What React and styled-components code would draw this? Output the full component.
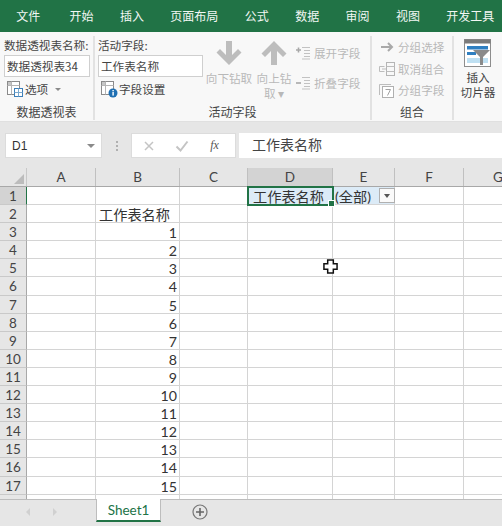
import React from "react";
import styled, { createGlobalStyle } from "styled-components";

const Global = createGlobalStyle`
  html, body { margin: 0; padding: 0; background: #fff; overflow: hidden; }
  #root { width: 502px; height: 526px; }
  * { box-sizing: border-box; }
`;
const cjk = `"Noto Sans CJK SC", "Liberation Sans", sans-serif`;
const sheetFont = `Lato, "Noto Sans CJK SC", sans-serif`;

const Page = styled.div`
  width: 502px; height: 526px; display: flex; flex-direction: column; overflow: hidden;
  background: #e6e6e6; font-family: ${cjk}; color: #444; position: relative;
`;
const TabBar = styled.div`
  height: 32px; flex: none; background: #217346; display: flex; padding-left: 3px; align-items: center;
`;
const Tab = styled.div`
  padding: 0 13.2px; margin-right: ${p => p.$mr || 0}px; color: #f2f7f4; font-size: 12px; line-height: 32px; white-space: nowrap;
`;
const Ribbon = styled.div`
  height: 90px; flex: none; background: #f8f8f8; display: flex; border-bottom: 1px solid #e0e0e0; padding-top: 4px;
`;
const Group = styled.div`
  width: ${p => p.$w}px; flex: none; display: flex; flex-direction: column; height: 84px;
  border-right: ${p => (p.$last ? 0 : 2)}px solid #e2e2e2;
`;
const GroupBody = styled.div`
  flex: 1; display: flex; min-height: 0; padding: ${p => p.$pad || "0"};
`;
const GroupLabel = styled.div`
  height: 16px; text-align: center; font-size: 12px; line-height: 16px; color: #444; flex: none;
`;
const Col = styled.div`
  display: flex; flex-direction: column; width: ${p => (p.$w ? p.$w + "px" : "auto")}; flex: none;
`;
const Caption = styled.div`
  font-size: 11.6px; line-height: 16px; height: 17px; color: #444; white-space: nowrap; padding-top: 1px;
`;
const TextBox = styled.div`
  height: 22px; width: ${p => p.$w}px; background: #fff; border: 1px solid #cfcfcf; font-size: 11.6px;
  line-height: 20px; padding-left: 2px; color: #444; white-space: nowrap; margin-top: 2px;
`;
const IconRow = styled.div`
  display: flex; align-items: center; height: 22px; margin-top: 1px; padding-left: 2px; gap: 1px; font-size: 11.6px; color: #444; white-space: nowrap;
`;
const BigButton = styled.div`
  width: ${p => p.$w}px; flex: none; display: flex; flex-direction: column; align-items: center;
  font-size: 11.6px; line-height: 15px; color: ${p => (p.$off ? "#b8b8b8" : "#444")}; text-align: center; padding-top: ${p => p.$top || 0}px;
  margin-left: ${p => p.$ml || 0}px;
`;
const BigLabel = styled.span`
  margin-top: ${p => p.$mt}px;
`;
const SmallStack = styled.div`
  display: flex; flex-direction: column; gap: ${p => p.$gap || 0}px; padding-top: ${p => p.$top || 0}px; margin-left: ${p => p.$ml || 0}px;
`;
const SmallButton = styled.div`
  height: 20px; display: flex; align-items: center; gap: 2px; font-size: 11.6px; color: #b8b8b8; white-space: nowrap;
  svg { flex: none; }
`;
const FormulaArea = styled.div`
  height: 46px; flex: none; display: flex; padding: 11px 0 0 5px; background: #e6e6e6;
`;
const NameBox = styled.div`
  width: 97px; height: 25px; background: #fff; border: 1px solid #dcdcdc; display: flex; align-items: center; justify-content: space-between;
  padding: 0 6px 0 6px; font-family: "Liberation Sans", sans-serif; font-size: 12px; color: #333;
`;
const Caret = styled.div`
  width: 0; height: 0; border-style: solid; border-color: #8a8a8a transparent transparent;
  border-width: ${p => (p.$small ? "3px 3px 0" : "4px 4px 0")}; margin-left: ${p => p.$ml || 0}px;
`;
const Dots = styled.div`
  width: 29px; flex: none; display: flex; flex-direction: column; align-items: center; justify-content: center; gap: 2px; height: 25px;
  span { width: 2px; height: 2px; background: #b0b0b0; }
`;
const FxBox = styled.div`
  width: 105px; height: 25px; background: #fff; border: 1px solid #dcdcdc; display: flex; align-items: center; flex: none;
`;
const FxCell = styled.div`
  width: 33px; display: flex; justify-content: center; align-items: center; flex: none;
  font-family: "Liberation Serif", serif; font-style: italic; font-size: 12px; color: #555;
`;
const FormulaInput = styled.div`
  flex: 1; margin-left: 3px; height: 25px; background: #fff; padding-left: 13px; font-size: 14px; line-height: 23px; color: #444; white-space: nowrap;
`;
const Sheet = styled.div`
  flex: none; height: 331px; position: relative; background: #fff; overflow: hidden;
`;
const HeaderRow = styled.div`
  display: flex; height: 19px; background: #e6e6e6; border-bottom: 1px solid #a8a8a8;
`;
const Corner = styled.div`
  width: 27px; flex: none; position: relative; border-right: 1px solid #c8c8c8;
  &::after { content: ""; position: absolute; right: 2px; bottom: 2px; width: 0; height: 0; border-style: solid; border-width: 0 0 10px 10px; border-color: transparent transparent #bcbcbc transparent; }
`;
const ColHead = styled.div`
  width: ${p => p.$w}px; flex: none; text-align: center; font-family: ${sheetFont}; font-size: 13.5px; line-height: 19px; color: #444;
  background: ${p => (p.$on ? "#d3d3d3" : "transparent")}; border-right: 1px solid #c0c0c0;
`;
const Row = styled.div`
  display: flex; height: 18.1px;
`;
const RowHead = styled.div`
  width: 27px; flex: none; text-align: center; font-family: ${sheetFont}; font-size: 13.5px; line-height: 19px; color: #444;
  background: ${p => (p.$on ? "#d3d3d3" : "#e6e6e6")}; border-right: ${p => (p.$on ? "1px solid #217346" : "1px solid #a8a8a8")}; border-bottom: 1px solid #c9c9c9;
`;
const Cell = styled.div`
  width: ${p => p.$w}px; flex: none; border-right: 1px solid #d4d4d4; border-bottom: 1px solid #d4d4d4;
  font-family: ${sheetFont}; font-size: 14.2px; line-height: 19px; color: #333; white-space: nowrap; overflow: hidden;
  text-align: ${p => (p.$right ? "right" : "left")}; padding: 0 2px 0 ${p => p.$pl || 2}px;
  background: ${p => p.$bg || "transparent"};
`;
const Selection = styled.div`
  position: absolute; left: 247px; top: 18px; width: 87px; height: 20px; border: 2px solid #217346; pointer-events: none;
  &::after { content: ""; position: absolute; right: -3px; bottom: -3px; width: 5px; height: 5px; background: #217346; border: 1px solid #fff; }
`;
const FilterBtn = styled.div`
  position: absolute; left: 379px; top: 20px; width: 16px; height: 15px; background: #fafafa; border: 1px solid #b0b0b0; display: flex; align-items: center; justify-content: center;
`;
const MiniCaret = styled.div`
  width: 0; height: 0; border-left: 3.5px solid transparent; border-right: 3.5px solid transparent; border-top: 4px solid #555;
`;
const Pointer = styled.svg`
  position: absolute; left: 323px; top: 259px; width: 15px; height: 15px;
`;
const SheetTabs = styled.div`
  flex: 1; display: flex; background: #e6e6e6; border-top: 1px solid #bdbdbd; position: relative;
`;
const NavArrows = styled.div`
  width: 96px; flex: none; display: flex; align-items: center; gap: 23px; padding: 0 0 3px 26px;
`;
const NavArrow = styled.div`
  width: 0; height: 0; border-top: 4px solid transparent; border-bottom: 4px solid transparent;
  ${p => (p.$left ? "border-right: 4px solid #d0d0d0;" : "border-left: 4px solid #d0d0d0;")}
`;
const ActiveTab = styled.div`
  width: 65px; height: 23px; margin-top: -1px; background: #fff; border-left: 1px solid #bdbdbd; border-right: 1px solid #bdbdbd; border-bottom: 2px solid #217346;
  text-align: center; font-family: ${sheetFont}; font-size: 13.5px; line-height: 23px; color: #217346; flex: none;
`;
const AddSheet = styled.svg`
  width: 16px; height: 16px; margin: 4px 0 0 31px; flex: none;
`;

const ColumnsW = [69, 84, 68, 85, 62, 69, 69];

const ArrowDown = ({ up }) => (
  <svg width="26" height="26" viewBox="0 0 26 26" style={up ? { transform: "rotate(180deg)" } : undefined}>
    <path d="M10 1h6v14l6-6 3.5 3.5L13 25 .5 12.5 4 9l6 6z" fill="#bdbdbd" />
  </svg>
);
const Sheets = ({ badge }) => (
  <svg width="18" height="18" viewBox="0 0 18 18">
    <rect x="1.5" y="1.5" width="12" height="13" fill="#fff" stroke="#8a8a8a" />
    <path d="M1.5 5.5h12M5.5 1.5v13" stroke="#b5b5b5" />
    <rect x="2" y="2" width="3" height="3" fill="#c6c6c6" />
    {badge ? (
      <>
        <circle cx="13" cy="13" r="4.5" fill="#1f6fb2" />
        <rect x="12.4" y="12" width="1.4" height="3.6" fill="#fff" />
        <rect x="12.4" y="10" width="1.4" height="1.3" fill="#fff" />
      </>
    ) : (
      <>
        <rect x="8.5" y="8.5" width="8" height="8" fill="#fff" stroke="#3d7fb8" />
        <path d="M8.5 12.5h8M12.5 8.5v8" stroke="#7aa9cf" />
      </>
    )}
  </svg>
);
const Expand = ({ minus }) => (
  <svg width="16" height="14" viewBox="0 0 16 14">
    <path d={minus ? "M0 7h5" : "M0 4h5M2.5 1.5v5"} stroke="#a8a8a8" strokeWidth="1.6" />
    <path d="M6 1.5h8M8 4.5h6M8 7.5h6M8 10.5h6M6 13h8" stroke="#c2c2c2" />
  </svg>
);
const GroupSel = () => (
  <svg width="18" height="12" viewBox="0 0 18 12">
    <path d="M3 6h10M10 2l4 4-4 4" stroke="#a9a9a9" strokeWidth="2" fill="none" />
  </svg>
);
const Ungroup = () => (
  <svg width="18" height="16" viewBox="0 0 18 16">
    <rect x="8.5" y="1.5" width="8" height="13" fill="none" stroke="#b5b5b5" />
    <path d="M8.5 5.5h8M8.5 10.5h8M1.5 5.5h5M1.5 10.5h5M1.5 5.5v5M4 8h4" stroke="#bdbdbd" />
  </svg>
);
const GroupField = () => (
  <svg width="18" height="16" viewBox="0 0 18 16">
    <path d="M1.5 13V2.5H13" stroke="#bdbdbd" fill="none" />
    <rect x="4.5" y="4.5" width="11" height="11" fill="#fff" stroke="#b0b0b0" />
    <path d="M7.5 7.5h5l-3 6" stroke="#a0a0a0" fill="none" />
  </svg>
);
const Slicer = () => (
  <svg width="28" height="28" viewBox="0 0 28 28">
    <rect x=".5" y=".5" width="26" height="27" fill="#fff" stroke="#8d8d8d" />
    <rect x=".5" y=".5" width="26" height="4" fill="#7a7a7a" />
    <rect x="3" y="7" width="21" height="3.5" fill="#2f7fc1" />
    <rect x="3" y="13" width="9" height="3" fill="#2f7fc1" />
    <rect x="3" y="19" width="21" height="5" fill="#bfe0f2" />
    <path d="M9 11h17l-7 7v8h-3v-8z" fill="#8a8a8a" />
  </svg>
);

const ribbonTabs = ["文件", "开始", "插入", "页面布局", "公式", "数据", "审阅", "视图", "开发工具"];

export default function App() {
  const rows = [];
  for (let i = 1; i <= 18; i++) rows.push(i);
  return (
    <Page>
      <Global />
      <TabBar>
        {ribbonTabs.map((t, i) => (
          <Tab key={t} $mr={i === 0 ? 3 : 0}>{t}</Tab>
        ))}
      </TabBar>
      <Ribbon>
        <Group $w={95}>
          <GroupBody $pad="0 0 0 4px">
            <Col>
              <Caption>数据透视表名称:</Caption>
              <TextBox $w={86}>数据透视表34</TextBox>
              <IconRow><Sheets /> 选项 <Caret $small $ml={6} /></IconRow>
            </Col>
          </GroupBody>
          <GroupLabel>数据透视表</GroupLabel>
        </Group>
        <Group $w={277}>
          <GroupBody $pad="0 0 0 3px">
            <Col $w={107}>
              <Caption>活动字段:</Caption>
              <TextBox $w={105}>工作表名称</TextBox>
              <IconRow><Sheets badge /> 字段设置</IconRow>
            </Col>
            <BigButton $w={48} $off $top={4}>
              <ArrowDown />
              <BigLabel $mt={5}>向下钻取</BigLabel>
            </BigButton>
            <BigButton $w={38} $off $ml={2} $top={4}>
              <ArrowDown up />
              <BigLabel $mt={5}>向上钻<br />取 ▾</BigLabel>
            </BigButton>
            <SmallStack $ml={3} $gap={10} $top={7}>
              <SmallButton><Expand /> 展开字段</SmallButton>
              <SmallButton><Expand minus /> 折叠字段</SmallButton>
            </SmallStack>
          </GroupBody>
          <GroupLabel>活动字段</GroupLabel>
        </Group>
        <Group $w={82}>
          <GroupBody $pad="0 0 0 6px">
            <SmallStack $gap={1.5} $top={1}>
              <SmallButton><GroupSel /> 分组选择</SmallButton>
              <SmallButton><Ungroup /> 取消组合</SmallButton>
              <SmallButton><GroupField /> 分组字段</SmallButton>
            </SmallStack>
          </GroupBody>
          <GroupLabel>组合</GroupLabel>
        </Group>
        <Group $w={48} $last>
          <GroupBody>
            <BigButton $w={48} $top={3}>
              <Slicer />
              <BigLabel $mt={3}>插入<br />切片器</BigLabel>
            </BigButton>
          </GroupBody>
        </Group>
      </Ribbon>
      <FormulaArea>
        <NameBox>D1<Caret /></NameBox>
        <Dots><span /><span /><span /></Dots>
        <FxBox>
          <FxCell>
            <svg width="12" height="12" viewBox="0 0 12 12"><path d="M2 2l8 8M10 2l-8 8" stroke="#c4c4c4" strokeWidth="1.5" /></svg>
          </FxCell>
          <FxCell>
            <svg width="14" height="12" viewBox="0 0 14 12"><path d="M1.5 6.5l4 4 7-9" stroke="#c4c4c4" strokeWidth="2" fill="none" /></svg>
          </FxCell>
          <FxCell>fx</FxCell>
        </FxBox>
        <FormulaInput>工作表名称</FormulaInput>
      </FormulaArea>
      <Sheet>
        <HeaderRow>
          <Corner />
          {"ABCDEFG".split("").map((c, i) => (
            <ColHead key={c} $w={ColumnsW[i]} $on={c === "D"}>{c}</ColHead>
          ))}
        </HeaderRow>
        {rows.map(r => (
          <Row key={r}>
            <RowHead $on={r === 1}>{r < 18 ? r : null}</RowHead>
            {ColumnsW.map((w, i) => {
              const isB = i === 1;
              let text = null;
              if (isB && r === 2) text = "工作表名称";
              if (isB && r > 2 && r < 18) text = r - 2;
              if (i === 3 && r === 1) text = "工作表名称";
              if (i === 4 && r === 1) text = "(全部)";
              return (
                <Cell key={i} $w={w} $right={isB && r > 2} $pl={isB && r === 2 ? 3 : i === 3 ? 5 : 2}
                  $bg={r === 1 && (i === 3 || i === 4) ? "#dcebf7" : undefined}>
                  {text}
                </Cell>
              );
            })}
          </Row>
        ))}
        <Selection />
        <FilterBtn><MiniCaret /></FilterBtn>
      </Sheet>
      <Pointer viewBox="0 0 16 16">
        <path d="M5 1h6v4h4v6h-4v4H5v-4H1V5h4z" fill="#fff" stroke="#111" strokeWidth="1.6" />
      </Pointer>
      <SheetTabs>
        <NavArrows><NavArrow $left /><NavArrow /></NavArrows>
        <ActiveTab>Sheet1</ActiveTab>
        <AddSheet viewBox="0 0 16 16">
          <circle cx="8" cy="8" r="7" fill="none" stroke="#777" strokeWidth="1.2" />
          <path d="M8 4v8M4 8h8" stroke="#666" strokeWidth="1.6" />
        </AddSheet>
      </SheetTabs>
    </Page>
  );
}
